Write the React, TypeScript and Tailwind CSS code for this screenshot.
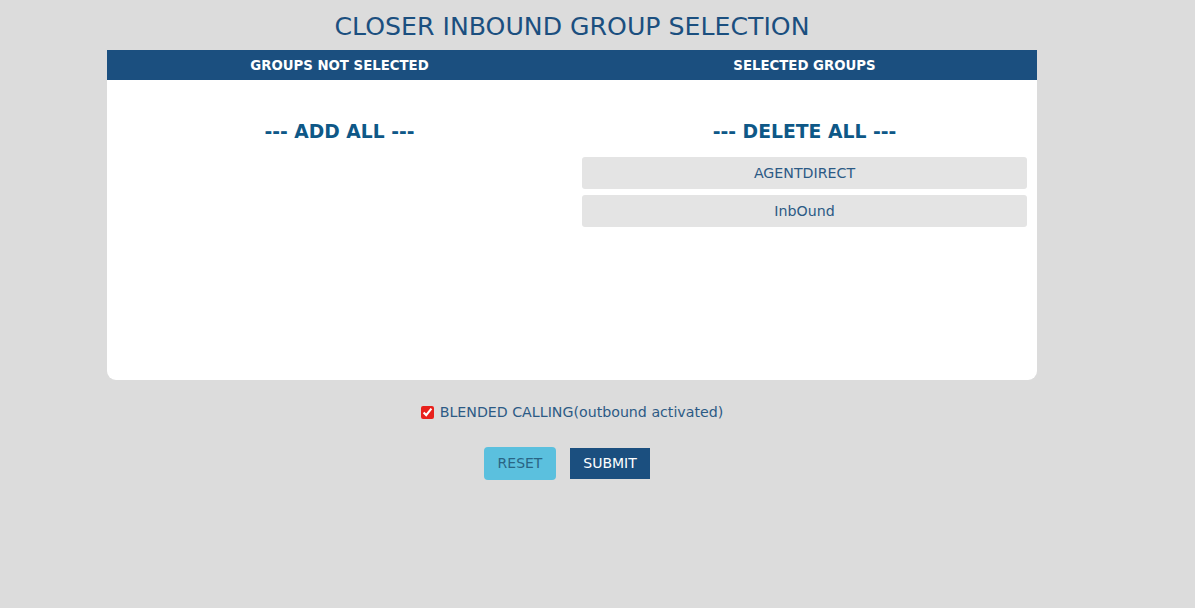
import { useState } from "react";

const selected = ["AGENTDIRECT", "InbOund"];

export default function App() {
	const [blended, setBlended] = useState(true);

	return (
		<div className="min-h-[608px] w-full bg-[#dcdcdc] font-['DejaVu_Sans',sans-serif]">
			<div className="flex w-[930px] flex-col ml-[107px]">
				<h1 className="flex h-[50px] items-center justify-center pt-[3px] text-[25.2px] text-[#1b4f7f]">
					CLOSER INBOUND GROUP SELECTION
				</h1>
				<section className="flex flex-col overflow-hidden rounded-b-[9px] bg-white">
					<div className="grid h-[30px] grid-cols-2 bg-[#1b4f7f] pt-[1px] text-[13.3px] font-bold text-white">
						<div className="flex items-center justify-center">GROUPS NOT SELECTED</div>
						<div className="flex items-center justify-center">SELECTED GROUPS</div>
					</div>
					<div className="grid h-[300px] grid-cols-2">
						<div className="flex flex-col items-center pt-[38px]">
							<span className="text-[18.7px] font-bold text-[#0e5887]">--- ADD ALL ---</span>
						</div>
						<div className="flex flex-col px-[10px] pt-[38px]">
							<span className="text-center text-[18.8px] font-bold text-[#0e5887]">
								--- DELETE ALL ---
							</span>
							<div className="mt-[11px] flex flex-col gap-[6px]">
								{selected.map((group) => (
									<div
										key={group}
										className="flex h-[32px] items-center justify-center rounded-[3px] bg-[#e4e4e4] text-[14.2px] text-[#2c5a85]"
									>
										{group}
									</div>
								))}
							</div>
						</div>
					</div>
				</section>
				<label className="mt-[22px] flex items-center justify-center gap-[6px] text-[14.2px] text-[#2c5a85]">
					<input
						type="checkbox"
						className="h-[13px] w-[13px] accent-[#e8211c]"
						checked={blended}
						onChange={(event) => setBlended(event.target.checked)}
					/>
					BLENDED CALLING(outbound activated)
				</label>
				<div className="mt-[24px] flex items-start justify-center gap-[14px] pr-[10px]">
					<button
						type="button"
						className="h-[33px] w-[72px] rounded-[4px] bg-[#5bc0de] text-[14px] text-[#2a6585]"
					>
						RESET
					</button>
					<button
						type="button"
						className="mt-[1px] h-[31px] w-[80px] bg-[#1b4f7f] text-[14px] text-white"
					>
						SUBMIT
					</button>
				</div>
			</div>
		</div>
	);
}
